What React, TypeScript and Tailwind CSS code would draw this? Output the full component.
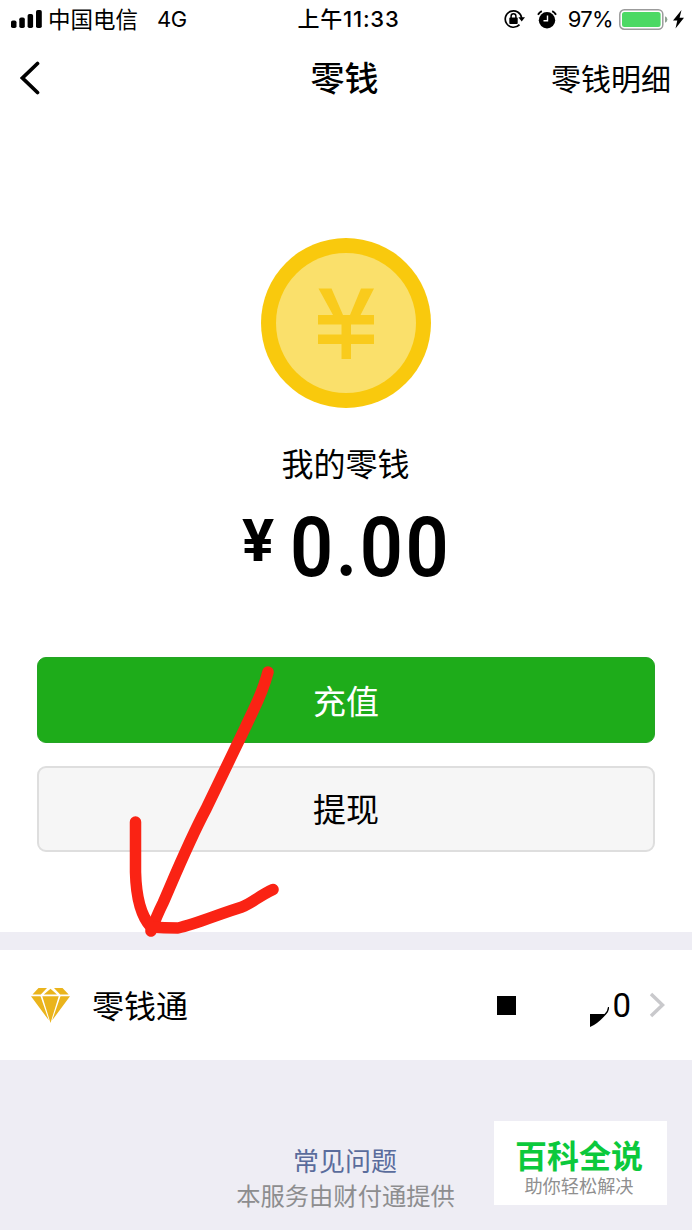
import React from 'react';

const StatusBar: React.FC = () => (
  <div className="flex h-[38px] items-center text-[22px] leading-[38px]">
    <div className="flex flex-1 items-center pl-[11px]">
      <svg className="h-[18px] w-[31px]" viewBox="0 0 31 18">
        <rect x="0" y="10.5" width="5.5" height="7.5" rx="1.8" />
        <rect x="8.3" y="7.5" width="5.5" height="10.5" rx="1.8" />
        <rect x="16.6" y="4" width="5.5" height="14" rx="1.8" />
        <rect x="25" y="0" width="5.8" height="18" rx="1.8" />
      </svg>
      <span className="ml-[6px] pt-px text-[22.5px]">中国电信</span>
      <span className="ml-[19px] tracking-[-0.5px]">4G</span>
    </div>
    <div className="pl-[2px] font-medium tracking-[0.8px]">上午11:33</div>
    <div className="flex flex-1 items-center justify-end pr-[8px]">
      {/* Rotation lock */}
      <svg className="h-[20px] w-[22px]" viewBox="0 0 22 20" fill="none" stroke="black" strokeWidth="1.7">
        <path d="M15.5 15.6A8.2 8.2 0 1 1 17.6 9" />
        <path d="M14.4 8.2h6.6l-3.3 4.4z" fill="black" stroke="none" />
        <rect x="5.3" y="8.6" width="8.4" height="6.4" rx=".8" fill="black" stroke="none" />
        <path d="M7.1 9V7.2a2.4 2.4 0 0 1 4.8 0V9" strokeWidth="1.5" />
      </svg>
      {/* Alarm */}
      <svg className="ml-[11px] h-[19px] w-[20px]" viewBox="0 0 20 19">
        <circle cx="10" cy="10.3" r="8.2" />
        <path d="M1 4.8A9 9 0 0 1 4.8 1.2M19 4.8A9 9 0 0 0 15.2 1.2" fill="none" stroke="black" strokeWidth="1.9" />
        <path d="M10.5 5.5v5.3H6.5" fill="none" stroke="white" strokeWidth="1.4" />
      </svg>
      <span className="ml-[11px] tracking-[-0.7px]">97%</span>
      <svg className="ml-[6px] h-[21px] w-[50px]" viewBox="0 0 50 21">
        <rect x=".8" y=".8" width="43" height="19.4" rx="4.5" fill="white" stroke="#9b9b9b" strokeWidth="1.5" />
        <rect x="3" y="3" width="38.6" height="15" rx="2.5" fill="#4cd964" />
        <path d="M46 7.2q2.4 1 2.4 3.3T46 13.8z" fill="#8fa292" />
      </svg>
      <svg className="ml-[4px] h-[19px] w-[11px]" viewBox="0 0 11 19">
        <path d="M8.5 0 0 10.5h4.3L2.5 18.5 11 7.8H6.6z" />
      </svg>
    </div>
  </div>
);

const NavBar: React.FC = () => (
  <div className="flex h-[80px] items-center text-[30px]">
    <div className="flex-1 pl-[20px]">
      <svg className="h-[34px] w-[20px]" viewBox="0 0 20 34" fill="none" stroke="black" strokeWidth="3.7">
        <path d="M17.5 2.5 2.5 17l15 14.5" strokeLinecap="round" />
      </svg>
    </div>
    <h1 className="pr-[2px] text-[34px] font-medium">零钱</h1>
    <div className="flex-1 pt-[2px] pr-[21px] text-right">零钱明细</div>
  </div>
);

const Coin: React.FC = () => (
  <svg className="h-[170px] w-[170px]" viewBox="0 0 170 170">
    <circle cx="85" cy="85" r="85" fill="#f9c90d" />
    <circle cx="85" cy="85" r="70" fill="#fae06b" />
    <path
      d="M57.5 50.500h13L82 77h7l11-26.500h13L99.500 77H113v9.500H90v10h23v9.500H90v15h-9.500v-15H57v-9.500h23.500v-10H57V77h15z"
      fill="#f9cb1c"
    />
  </svg>
);

const Diamond: React.FC = () => (
  <svg className="h-[35px] w-[39px]" viewBox="0 0 39 35" fill="#eab41c">
    <path d="M7.5 0h8.5L9.8 6.5H1.5zM19.5 .8l6.5 5.7H12.8zM23 0h8.5l6.2 6.5h-8.5zM0 8.3h9.5l8.3 24zM11.3 8.3h16.4l-8.2 26.7zM29.5 8.3H39L21.2 32.3z" />
  </svg>
);

const Arrow: React.FC = () => (
  <svg
    className="pointer-events-none absolute left-[120px] top-[655px] h-[290px] w-[170px]"
    viewBox="120 655 170 290"
    fill="none"
    stroke="#fa2314"
    strokeWidth="11.500"
    strokeLinecap="round"
    strokeLinejoin="round"
  >
    <path d="M268 672C262 695 256 704 246 726L206 809C190 839 176 873 163 903Q157 915 151 931" />
    <path d="M135.5 822V872C136 892 139 914 151 927Q164 928 178 928C196 924 219 914 242 907C252 903 259 896 273 889.5" />
  </svg>
);

const App: React.FC = () => {
  return (
    <div className="relative flex h-[1230px] w-[692px] flex-col overflow-hidden bg-white font-['Inter','Noto_Sans_CJK_SC',sans-serif] text-black">
      <StatusBar />
      <NavBar />

      <main className="flex h-[814px] flex-col items-center px-[37px] pt-[120px]">
        <Coin />
        <p className="mt-[33px] pr-px text-[32px] leading-[48px]">我的零钱</p>
        <div className="mt-[9px] flex h-[100px] items-start font-['Roboto',sans-serif]">
          <span className="mt-[8px] text-[60px] leading-[70px] font-bold">¥</span>
          <span className="ml-[16px] w-[160px] origin-left scale-x-90 text-[84px] leading-[100px] font-semibold tracking-[2.8px]">
            0.00
          </span>
        </div>
        <button className="mt-[59px] h-[86px] w-full shrink-0 rounded-[9px] border border-[#25a425] bg-[#1eac1a] pt-[5px] text-[33px] text-white">
          充值
        </button>
        <button className="mt-[23px] h-[86px] w-full shrink-0 rounded-[9px] border-2 border-[#dedede] bg-[#f6f6f6] pt-[3px] text-[33px]">
          提现
        </button>
      </main>

      <div className="h-[18px] bg-[#eeedf4]" />

      <section className="flex h-[110px] items-center pr-[27px] pl-[31px]">
        <Diamond />
        <span className="ml-[22px] flex-1 pt-[4px] text-[32px]">零钱通</span>
        <div className="h-[19px] w-[19px] bg-black" />
        <svg className="ml-[73px] h-[22px] w-[20px] translate-y-[11px]" viewBox="0 0 20 22">
          <path d="M1 9h14.500Q18.500 6.500 19 2H20V4Q19.500 7 17 9.500Q8 19.500 1 22z" />
        </svg>
        <span className="ml-[3px] pt-px font-['Roboto',sans-serif] text-[33px]">0</span>
        <svg className="ml-[18px] h-[26px] w-[16px]" viewBox="0 0 16 26" fill="none" stroke="#c9c9cc" strokeWidth="3.5">
          <path d="M2 2 13.5 13 2 24" />
        </svg>
      </section>

      <footer className="flex flex-1 flex-col items-center bg-[#eeedf4] pt-[85px]">
        <a className="pr-[2px] text-[26px] leading-[34px] text-[#5a6c9c]">常见问题</a>
        <p className="pr-px text-[24.3px] leading-[34px] text-[#8d8d8f]">本服务由财付通提供</p>
      </footer>

      <div className="absolute top-[1121px] left-[494px] flex h-[84px] w-[173px] flex-col items-center bg-white pt-[15px] pr-[3px]">
        <span className="text-[32px] leading-[42px] font-bold text-[#0bc93c]">百科全说</span>
        <span className="text-[18.2px] leading-[16px] text-[#8f8f8f]">助你轻松解决</span>
      </div>

      <Arrow />
    </div>
  );
};

export default App;
